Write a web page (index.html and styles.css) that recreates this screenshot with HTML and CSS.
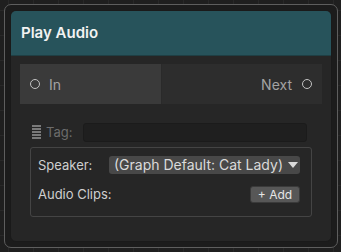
FILE: index.html
```html
<!DOCTYPE html>
<html lang="en">

<head>
    <meta charset="UTF-8">
    <title>Play Audio</title>
    <link rel="stylesheet" href="styles.css">
</head>

<body>
    <div class="canvas">
        <div class="selection">
            <div class="node">
                <div class="node-title">Play Audio</div>
                <div class="node-body">
                    <div class="ports">
                        <div class="port port-in"><span class="dot"></span><span>In</span></div>
                        <div class="port port-out"><span>Next</span><span class="dot"></span></div>
                    </div>
                    <div class="tag-row">
                        <span class="tag-icon"></span>
                        <span class="tag-label">Tag:</span>
                        <div class="tag-field"></div>
                    </div>
                    <div class="group">
                        <div class="field-row">
                            <span class="label label-fixed">Speaker:</span>
                            <div class="dropdown">(Graph Default: Cat Lady)<span class="caret"></span></div>
                        </div>
                        <div class="field-row">
                            <span class="label">Audio Clips:</span>
                            <button class="add-btn">+ Add</button>
                        </div>
                    </div>
                </div>
            </div>
        </div>
    </div>
</body>

</html>
```

FILE: styles.css
```css
/* reset start */
* {
    padding: 0;
    margin: 0;
    box-sizing: border-box;
}

html,
body {
    width: 100%;
    height: 100%;
    overflow: hidden;
    background-color: #1f1f1f;
    font-family: Inter, "Noto Sans", sans-serif;
}

/* reset end */

.canvas {
    width: 100%;
    height: 100%;
    padding: 4px;
    background-image:
        linear-gradient(to right, #282828 1px, transparent 1px),
        linear-gradient(to bottom, #282828 1px, transparent 1px);
    background-size: 25px 25px;
    background-position: 8px 10px;
}

.selection {
    width: 334px;
    height: 244px;
    border: 1px solid #5e5e5e;
    border-radius: 7px;
    background-color: #1c1c1c;
    padding: 5px;
}

.node {
    height: 100%;
    border-radius: 6px;
    background-color: #262626;
    overflow: hidden;
    border: 1px solid #1a1a1a;
}

.node-title {
    height: 45px;
    background-color: #27535b;
    color: #f2f2f2;
    font-size: 15px;
    font-weight: 600;
    padding-left: 10px;
    line-height: 44px;
    border-bottom: 1px solid #1f3f44;
}

.node-body {
    padding: 8px 9px 0 9px;
}

.ports {
    display: flex;
    height: 40px;
    font-size: 14px;
    color: #a3a3a3;
}

.port {
    display: flex;
    align-items: center;
    gap: 9px;
}

.port-in {
    width: 142px;
    background-color: #3a3a3a;
    padding-left: 10px;
    border-right: 1px solid #2a2a2a;
}

.port-out {
    flex: 1;
    background-color: #2d2d2d;
    justify-content: flex-end;
    padding-right: 10px;
    gap: 10px;
}

.dot {
    width: 10px;
    height: 10px;
    border: 1.5px solid #c2c2c2;
    border-radius: 50%;
}

.tag-row {
    display: flex;
    align-items: center;
    height: 20px;
    margin: 18px 0 0 12px;
    padding-right: 15px;
}

.tag-icon {
    width: 9px;
    height: 14px;
    background-image: linear-gradient(to bottom, #7a7a7a 2px, transparent 2px);
    background-size: 9px 3px;
}

.tag-label {
    color: #6c6c6c;
    font-size: 13px;
    margin-left: 5px;
    width: 37px;
}

.tag-field {
    flex: 1;
    height: 19px;
    background-color: #1f1f1f;
    border-radius: 3px;
    border: 1px solid #1b1b1b;
}

.group {
    margin: 5px 10px 0 10px;
    height: 70px;
    border: 1px solid #444;
    border-radius: 3px;
    padding: 8px 11px 0 7px;
}

.field-row {
    display: flex;
    align-items: center;
    justify-content: space-between;
    height: 18px;
    margin-bottom: 11px;
    color: #cfcfcf;
    font-size: 13px;
}

.label {
    white-space: nowrap;
}

.label-fixed {
    width: 71px;
    flex: none;
}

.dropdown {
    flex: 1;
    height: 18px;
    background-color: #484848;
    border-radius: 3px;
    color: #dadada;
    font-size: 14px;
    line-height: 18px;
    padding-left: 5px;
    display: flex;
    align-items: center;
    gap: 5px;
}

.caret {
    width: 0;
    height: 0;
    border-left: 5px solid transparent;
    border-right: 5px solid transparent;
    border-top: 6px solid #dadada;
}

.add-btn {
    font-family: inherit;
    width: 50px;
    height: 17px;
    background-color: #575757;
    border: 1px solid #3a3a3a;
    border-radius: 3px;
    color: #e6e6e6;
    font-size: 12px;
    line-height: 15px;
}
```
